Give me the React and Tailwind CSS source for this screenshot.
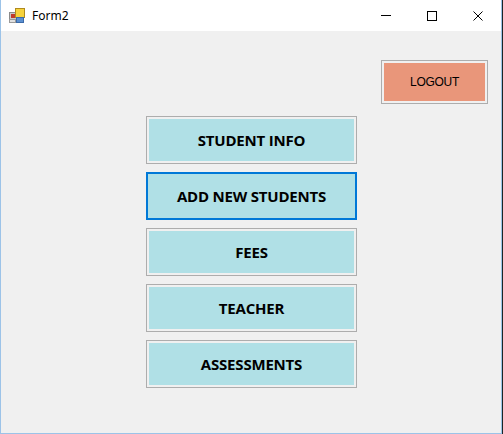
const menu = ['STUDENT INFO', 'ADD NEW STUDENTS', 'FEES', 'TEACHER', 'ASSESSMENTS']

function FormIcon() {
  return (
    <svg width="16" height="16" viewBox="0 0 16 16">
      <rect x="0.5" y="4.5" width="7" height="7" fill="#c8c8c8" stroke="#8a8a8a" />
      <rect x="2" y="6" width="4" height="4" fill="#c0392b" />
      <rect x="6.5" y="0.5" width="9" height="9" fill="#f6d23c" stroke="#b08a1e" />
      <rect x="7.5" y="9.5" width="7" height="5" fill="#5a8fd0" stroke="#3b6aa8" />
      <rect x="0.5" y="11.5" width="6" height="3" fill="#e0e0e0" stroke="#9a9a9a" />
    </svg>
  )
}

function TitleBar() {
  return (
    <div className="h-[31px] bg-white flex items-center shrink-0">
      <div className="pl-[8px] pr-[7px] pt-[1px]">
        <FormIcon />
      </div>
      <span className="text-[12px] text-black font-['Noto_Sans',sans-serif]">Form2</span>
      <div className="ml-auto flex h-full items-center">
        <div className="w-[46px] h-full flex items-center justify-center">
          <div className="w-[10px] h-px bg-black" />
        </div>
        <div className="w-[46px] h-full flex items-center justify-center">
          <div className="w-[10px] h-[10px] border border-black" />
        </div>
        <div className="w-[46px] h-full flex items-center justify-center">
          <svg width="10" height="10" viewBox="0 0 10 10">
            <path d="M0.5 0.5 L9.5 9.5 M9.5 0.5 L0.5 9.5" stroke="black" strokeWidth="1" />
          </svg>
        </div>
      </div>
    </div>
  )
}

export default function App() {
  return (
    <div className="w-[503px] h-[434px] flex bg-[#1b2626]">
      <div className="w-[502px] h-[434px] flex flex-col border-x border-b border-[#9cc3e8] bg-[#f0f0f0]">
        <TitleBar />
        <div className="flex-1 flex flex-col">
          <div className="flex justify-end pt-[29px] pr-[13px]">
            <button className="w-[107px] h-[44px] border border-[#adadad] p-[2px] bg-[#f0f0f0]">
              <div className="w-full h-full bg-[#e9967a] flex items-center justify-center text-[12px] tracking-[-0.3px] text-black font-['Liberation_Sans',sans-serif]">
                LOGOUT
              </div>
            </button>
          </div>
          <div className="flex flex-col gap-[8px] mt-[12px] ml-[145px]">
            {menu.map((m, i) => (
              <button
                key={m}
                className={
                  i === 1
                    ? 'w-[211px] h-[48px] border-2 border-[#0078d7] bg-[#b0e0e6] flex items-center justify-center'
                    : 'w-[211px] h-[48px] border border-[#adadad] p-[2px] bg-[#f0f0f0]'
                }
              >
                <div className="w-full h-full bg-[#b0e0e6] flex items-center justify-center text-[15px] tracking-[-0.2px] font-bold text-black font-['Open_Sans',sans-serif]">
                  {m}
                </div>
              </button>
            ))}
          </div>
        </div>
      </div>
    </div>
  )
}
